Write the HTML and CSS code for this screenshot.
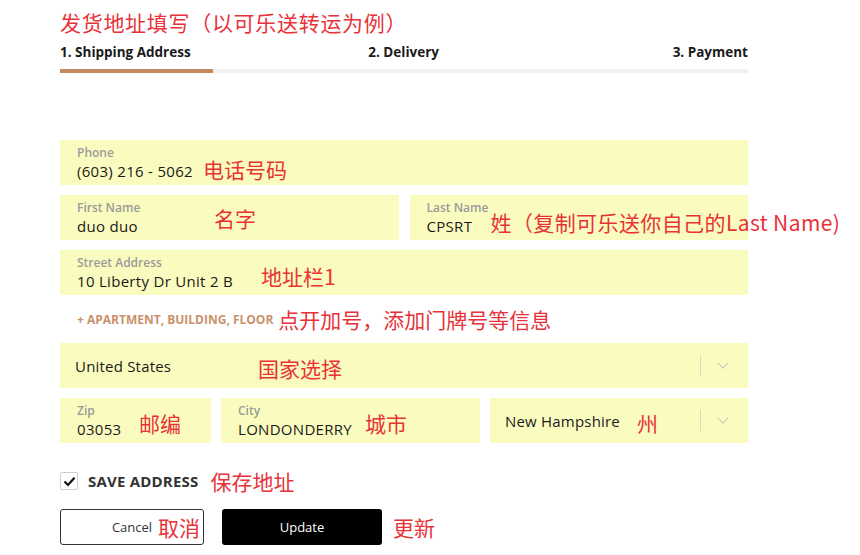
FILE: index.html
```html
<!DOCTYPE html>
<html lang="zh-CN">
<head>
    <meta charset="UTF-8">
    <title>发货地址填写</title>
    <link rel="stylesheet" href="styles.css">
</head>
<body>
<div class="page">
    <h1 class="title">发货地址填写（以可乐送转运为例）</h1>

    <!-- 步骤条 -->
    <div class="steps">
        <span>1. Shipping Address</span>
        <span class="step-mid">2. Delivery</span>
        <span>3. Payment</span>
    </div>
    <div class="progress"><div class="progress-done"></div></div>

    <!-- 表单 -->
    <div class="form">
        <div class="field">
            <div class="label">Phone</div>
            <div class="value">(603) 216 - 5062</div>
            <span class="note note-phone">电话号码</span>
        </div>

        <div class="row">
            <div class="field">
                <div class="label">First Name</div>
                <div class="value">duo duo</div>
                <span class="note note-first">名字</span>
            </div>
            <div class="field">
                <div class="label">Last Name</div>
                <div class="value">CPSRT</div>
                <span class="note note-last">姓（复制可乐送你自己的Last Name)</span>
            </div>
        </div>

        <div class="field">
            <div class="label">Street Address</div>
            <div class="value">10 Liberty Dr Unit 2 B</div>
            <span class="note note-street">地址栏1</span>
        </div>

        <div class="apartment">
            <span class="apt-link">+ APARTMENT, BUILDING, FLOOR</span>
            <span class="inline-note">点开加号，添加门牌号等信息</span>
        </div>

        <div class="field select">
            <div class="select-text">United States</div>
            <div class="select-arrow"><span class="divider"></span><span class="chevron"></span></div>
            <span class="note note-country">国家选择</span>
        </div>

        <div class="row row-3">
            <div class="field">
                <div class="label">Zip</div>
                <div class="value">03053</div>
                <span class="note note-zip">邮编</span>
            </div>
            <div class="field">
                <div class="label">City</div>
                <div class="value">LONDONDERRY</div>
                <span class="note note-city">城市</span>
            </div>
            <div class="field select">
                <div class="select-text">New Hampshire</div>
                <div class="select-arrow"><span class="divider"></span><span class="chevron"></span></div>
                <span class="note note-state">州</span>
            </div>
        </div>

        <div class="save">
            <span class="checkbox">
                <svg width="13" height="11" viewBox="0 0 13 11"><path d="M1.5 5.5 L5 9 L11.5 1.8" fill="none" stroke="#111" stroke-width="2.2"/></svg>
            </span>
            <span class="save-text">SAVE ADDRESS</span>
            <span class="inline-note save-note">保存地址</span>
        </div>

        <div class="buttons">
            <button class="btn btn-cancel">Cancel<span class="note note-cancel">取消</span></button>
            <button class="btn btn-update">Update</button>
            <span class="inline-note update-note">更新</span>
        </div>
    </div>
</div>
</body>
</html>
```

FILE: styles.css
```css
body {
    margin: 0;
    padding: 0;
    background: #fff;
    font-family: "Open Sans", "Noto Sans CJK SC", sans-serif;
    color: #222;
}

.page {
    width: 688px;
    margin-left: 60px;
}

/* 标题 */
.title {
    margin: 0;
    padding-top: 8px;
    height: 30px;
    font-size: 21px;
    line-height: 28px;
    font-weight: normal;
    color: #e8323a;
    font-family: "Noto Sans CJK SC", sans-serif;
    letter-spacing: 0.7px;
}

/* 步骤条 */
.steps {
    display: flex;
    justify-content: space-between;
    font-size: 13.5px;
    font-weight: 700;
    line-height: 18px;
    color: #1a1a1a;
    margin-top: 5px;
}
.step-mid {
    margin-right: 56px;
}
.progress {
    margin-top: 8px;
    height: 4px;
    background: #f1f1f1;
}
.progress-done {
    width: 153px;
    height: 4px;
    background: #c48a62;
}

/* 表单 */
.form {
    margin-top: 67px;
    display: flex;
    flex-direction: column;
    gap: 10px;
}
.row {
    display: grid;
    grid-template-columns: 1fr 1fr;
    gap: 11px;
}
.row-3 {
    grid-template-columns: 151px 259px 1fr;
    gap: 10px;
}
.field {
    position: relative;
    height: 45px;
    box-sizing: border-box;
    background: #fafcbf;
    padding: 5px 17px 0;
}
.label {
    font-size: 12px;
    line-height: 15px;
    color: #9a9a9a;
    font-weight: 600;
}
.value {
    font-size: 15px;
    line-height: 22px;
    color: #1a1a1a;
    letter-spacing: 0.3px;
}
.select {
    display: flex;
    align-items: center;
    padding: 0 15px;
}
.select-text {
    flex: 1;
    font-size: 15px;
    color: #1a1a1a;
    font-weight: 500;
    letter-spacing: 0.2px;
}
.select-arrow {
    display: flex;
    align-items: center;
    gap: 18px;
    margin-right: 6px;
}
.divider {
    width: 1px;
    height: 21px;
    background: #d9d9c0;
}
.chevron {
    width: 7px;
    height: 7px;
    border-right: 1.3px solid #c9c9b2;
    border-bottom: 1.3px solid #c9c9b2;
    transform: rotate(45deg);
    margin-top: -5px;
}

/* 标注 */
.note, .inline-note {
    font-family: "Noto Sans CJK SC", sans-serif;
    font-size: 21px;
    line-height: 22px;
    color: #e8323a;
    white-space: nowrap;
}
.note {
    position: absolute;
}
.note-phone { left: 143px; top: 18px; }
.note-first { left: 154px; top: 12px; }
.note-last { left: 81px; top: 16px; letter-spacing: 0.4px; }
.note-street { left: 201px; top: 15px; }
.note-country { left: 198px; top: 14px; }
.note-zip { left: 79px; top: 14px; }
.note-city { left: 144px; top: 14px; }
.note-state { left: 147px; top: 14px; }

.apartment {
    display: flex;
    align-items: center;
    height: 28px;
    padding-left: 17px;
}
.apt-link {
    font-size: 12px;
    font-weight: 700;
    color: #c8926b;
}
.apartment .inline-note {
    margin-left: 5px;
}

/* 保存地址 */
.save {
    display: flex;
    align-items: center;
    margin-top: 16px;
    height: 24px;
}
.checkbox {
    width: 16px;
    height: 16px;
    border: 1px solid #cfcfcf;
    border-radius: 2px;
    display: flex;
    align-items: center;
    justify-content: center;
}
.save-text {
    margin-left: 10px;
    font-size: 15px;
    font-weight: 700;
    color: #333;
    letter-spacing: 0.2px;
}
.save-note {
    margin-left: 12px;
}

/* 按钮 */
.buttons {
    display: flex;
    align-items: center;
    margin-top: 6px;
}
.btn {
    position: relative;
    height: 36px;
    border-radius: 3px;
    font-family: "Open Sans", sans-serif;
    font-size: 13px;
    cursor: pointer;
}
.btn-cancel {
    width: 144px;
    background: #fff;
    border: 1px solid #333;
    color: #333;
}
.note-cancel {
    left: 97px;
    top: 6px;
}
.btn-update {
    width: 160px;
    margin-left: 18px;
    background: #000;
    border: none;
    color: #fff;
}
.update-note {
    margin-left: 11px;
}
```
